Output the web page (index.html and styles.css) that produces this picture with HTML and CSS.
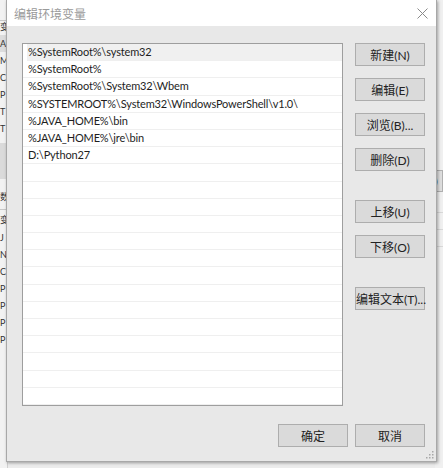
FILE: index.html
```html
<!DOCTYPE html>
<html lang="zh-CN">
<head>
    <meta charset="UTF-8">
    <title>编辑环境变量</title>
    <link rel="stylesheet" href="styles.css">
</head>
<body>
    <div class="desktop">
        <div class="bg-left">
            <div class="bg-head">变</div>
            <div class="bg-row sel">A</div>
            <div class="bg-row">M</div>
            <div class="bg-row">C</div>
            <div class="bg-row">P</div>
            <div class="bg-row">T</div>
            <div class="bg-row">T</div>
            <div class="bg-gap"></div>
            <div class="bg-title">数</div>
            <div class="bg-head2">变</div>
            <div class="bg-row">J</div>
            <div class="bg-row">N</div>
            <div class="bg-row">C</div>
            <div class="bg-row">P</div>
            <div class="bg-row">P</div>
            <div class="bg-row">P</div>
            <div class="bg-row">P</div>
        </div>
        <div class="bg-right">
            <div class="bg-btn">)</div>
            <div class="bg-line"></div>
            <div class="bg-line"></div>
            <div class="bg-line"></div>
        </div>
    </div>

    <div class="dialog">
        <div class="titlebar">
            <span class="title">编辑环境变量</span>
            <svg class="close" width="11" height="11" viewBox="0 0 11 11">
                <path d="M0.5 0.5 L10.5 10.5 M10.5 0.5 L0.5 10.5" stroke="#8a8a8a" stroke-width="1" fill="none"/>
            </svg>
        </div>

        <div class="content">
            <div class="main-row">
                <div class="list">
                    <div class="item current">%SystemRoot%\system32</div>
                    <div class="item">%SystemRoot%</div>
                    <div class="item">%SystemRoot%\System32\Wbem</div>
                    <div class="item">%SYSTEMROOT%\System32\WindowsPowerShell\v1.0\</div>
                    <div class="item">%JAVA_HOME%\bin</div>
                    <div class="item">%JAVA_HOME%\jre\bin</div>
                    <div class="item">D:\Python27</div>
                    <div class="item"></div>
                    <div class="item"></div>
                    <div class="item"></div>
                    <div class="item"></div>
                    <div class="item"></div>
                    <div class="item"></div>
                    <div class="item"></div>
                    <div class="item"></div>
                    <div class="item"></div>
                    <div class="item"></div>
                    <div class="item"></div>
                    <div class="item"></div>
                    <div class="item"></div>
                    <div class="item"></div>
                    <div class="item"></div>
                </div>

                <div class="side-buttons">
                    <div class="btn-group">
                        <button class="btn">新建(N)</button>
                        <button class="btn">编辑(E)</button>
                        <button class="btn">浏览(B)...</button>
                        <button class="btn">删除(D)</button>
                    </div>
                    <div class="btn-group">
                        <button class="btn">上移(U)</button>
                        <button class="btn">下移(O)</button>
                    </div>
                    <div class="btn-group">
                        <button class="btn">编辑文本(T)...</button>
                    </div>
                </div>
            </div>

            <div class="footer">
                <button class="btn">确定</button>
                <button class="btn">取消</button>
            </div>
        </div>

        <svg class="grip" width="9" height="9" viewBox="0 0 9 9">
            <rect x="7" y="1" width="1.5" height="1.5" fill="#a8a8a8"/>
            <rect x="4" y="4" width="1.5" height="1.5" fill="#a8a8a8"/>
            <rect x="7" y="4" width="1.5" height="1.5" fill="#a8a8a8"/>
            <rect x="1" y="7" width="1.5" height="1.5" fill="#a8a8a8"/>
            <rect x="4" y="7" width="1.5" height="1.5" fill="#a8a8a8"/>
            <rect x="7" y="7" width="1.5" height="1.5" fill="#a8a8a8"/>
        </svg>
    </div>
</body>
</html>
```

FILE: styles.css
```css
* {
    margin: 0;
    padding: 0;
    box-sizing: border-box;
}

body {
    width: 443px;
    height: 468px;
    overflow: hidden;
    background: #ececec;
    font-family: Lato, "Noto Sans CJK SC", sans-serif;
    font-size: 12px;
    color: #222;
}

/* window behind the dialog */
.desktop {
    display: flex;
    justify-content: space-between;
    height: 468px;
}

.bg-left {
    width: 8px;
    overflow: hidden;
    background: #f2f2f2;
    padding-top: 20px;
    border-right: 1px solid #d0d0d0;
    font-size: 9px;
    color: #333;
}

.bg-head {
    height: 15px;
    line-height: 12px;
    border-top: 1px solid #c8c8c8;
}

.bg-row {
    height: 17px;
    line-height: 17px;
}

.bg-row.sel {
    background: #dcdcdc;
}

.bg-gap {
    height: 36px;
    margin-top: 6px;
    background: #dadada;
}

.bg-title {
    height: 24px;
    line-height: 24px;
    margin-top: 6px;
}

.bg-head2 {
    height: 20px;
    line-height: 20px;
    border-top: 1px solid #c8c8c8;
}

.bg-right {
    width: 8px;
    overflow: hidden;
    background: #f0f0f0;
    padding-top: 170px;
    font-size: 10px;
}

.bg-btn {
    height: 22px;
    line-height: 20px;
    background: #dedede;
    border: 1px solid #b0b0b0;
    border-left: none;
    margin-bottom: 4px;
}

.bg-line {
    height: 17px;
    border-bottom: 1px solid #d8d8d8;
}

/* the dialog window */
.dialog {
    position: absolute;
    left: 6px;
    top: 0;
    width: 431px;
    height: 462px;
    background: #e8e8e8;
    border: 1px solid #a8a8a8;
    border-top: none;
    box-shadow: 1px 1px 3px rgba(0, 0, 0, 0.35);
    display: flex;
    flex-direction: column;
}

.titlebar {
    height: 26px;
    background: #fff;
    display: flex;
    align-items: center;
    justify-content: space-between;
    padding: 0 7px;
}

.title {
    color: #9a9a9a;
    font-family: "Noto Sans CJK SC", sans-serif;
    font-size: 12px;
}

.close {
    margin-right: 1px;
}

.content {
    flex: 1;
    padding: 17px 11px 14px 15px;
    display: flex;
    flex-direction: column;
}

.main-row {
    display: flex;
    gap: 12px;
}

.list {
    width: 321px;
    height: 363px;
    background: #fff;
    border: 1px solid #9e9e9e;
    overflow: hidden;
}

.item {
    height: 17.2px;
    line-height: 16px;
    padding-left: 5px;
    border-bottom: 1px solid #efefef;
    white-space: nowrap;
    font-size: 11px;
    letter-spacing: -0.15px;
    color: #1e1e1e;
}

.item.current {
    background: #f0f0f0;
    margin-left: 4px;
    padding-left: 1px;
}

.side-buttons {
    display: flex;
    flex-direction: column;
    gap: 29px;
}

.btn-group {
    display: flex;
    flex-direction: column;
    gap: 12px;
}

.btn {
    width: 70px;
    height: 23px;
    background: #dadada;
    border: 1px solid #adadad;
    font-family: Lato, "Noto Sans CJK SC", sans-serif;
    font-size: 12px;
    color: #222;
    white-space: nowrap;
}

.footer {
    margin-top: auto;
    display: flex;
    justify-content: flex-end;
    gap: 7px;
}

.grip {
    position: absolute;
    right: 2px;
    bottom: 2px;
}
```
